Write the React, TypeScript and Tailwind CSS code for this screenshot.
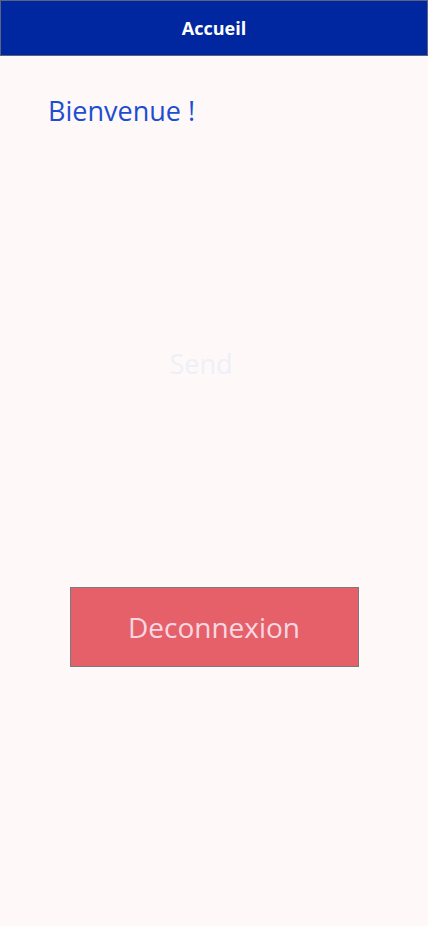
import React from "react";

export default function App(): JSX.Element {
  return (
    <div className="min-h-[926px] w-full bg-[#fff8f8] flex flex-col font-['Open_Sans','Noto_Sans',sans-serif]">
      {/* barre de titre */}
      <header className="h-[56px] bg-[#0026a0] border border-[#5a6480] flex items-center justify-center">
        <span className="text-white text-[18px] font-bold">Accueil</span>
      </header>

      <div className="flex flex-col">
        <h1 className="pl-[48px] pt-[35px] text-[27px] leading-[40px] text-[#1d4ed0]">Bienvenue !</h1>

        <div className="mt-[213px] flex justify-center pr-[26px]">
          <span className="text-[27px] leading-[40px] text-[#eef0f8]">Send</span>
        </div>

        <div className="mt-[203px] flex justify-center">
          <button className="w-[289px] h-[80px] bg-[#e6606a] border border-[#7a7a7a] text-[28px] text-[#f7d8e2]">
            Deconnexion
          </button>
        </div>
      </div>
    </div>
  );
}
